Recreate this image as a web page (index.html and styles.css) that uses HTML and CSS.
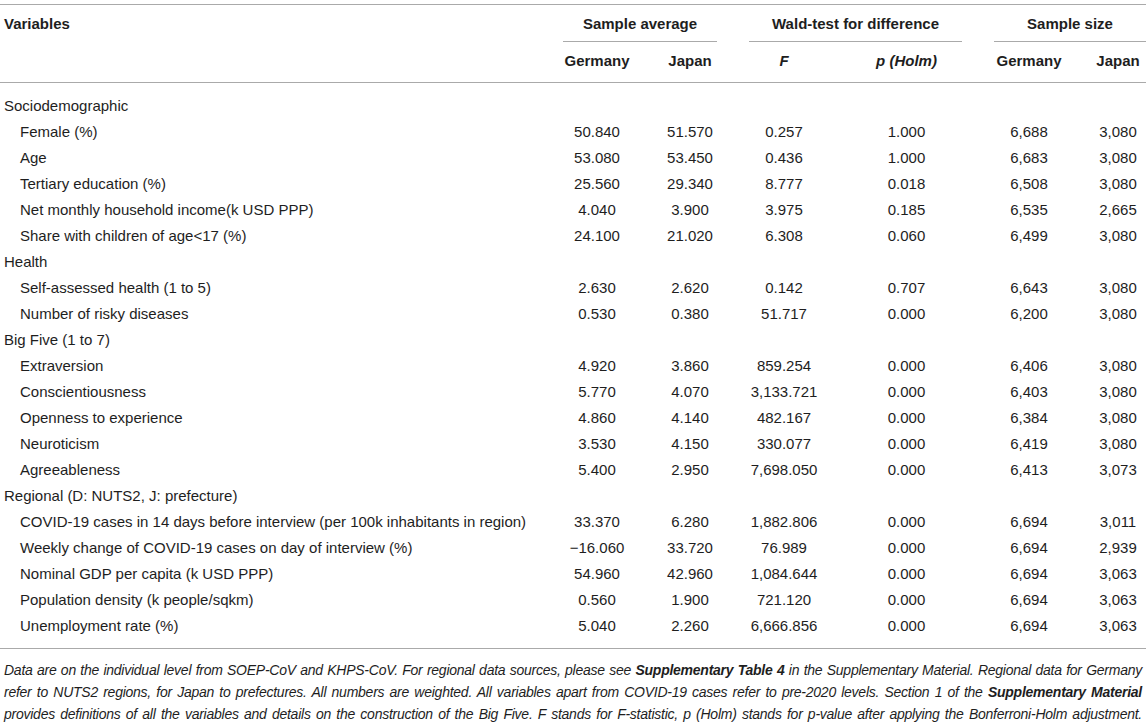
FILE: index.html
```html
<!DOCTYPE html>
<html lang="en">
<head>
<meta charset="utf-8">
<title>Table</title>
<link rel="stylesheet" href="styles.css">
</head>
<body>
<div class="page">
<table class="data">
  <colgroup>
    <col class="c-var">
    <col class="c-g1">
    <col class="c-j1">
    <col class="c-f">
    <col class="c-p">
    <col class="c-g2">
    <col class="c-j2">
  </colgroup>
  <thead>
    <tr class="hrow1">
      <th class="h-var" rowspan="2">Variables</th>
      <th class="h-group" colspan="2"><div class="group-label">Sample average</div></th>
      <th class="h-group" colspan="2"><div class="group-label">Wald-test for difference</div></th>
      <th class="h-group h-group-last" colspan="2"><div class="group-label">Sample size</div></th>
    </tr>
    <tr class="hrow2">
      <th>Germany</th>
      <th>Japan</th>
      <th><i>F</i></th>
      <th><i>p (Holm)</i></th>
      <th>Germany</th>
      <th class="last">Japan</th>
    </tr>
  </thead>
  <tbody>
    <tr class="cat first"><td>Sociodemographic</td><td></td><td></td><td></td><td></td><td></td><td class="last"></td></tr>
    <tr><td class="ind">Female (%)</td><td>50.840</td><td>51.570</td><td>0.257</td><td>1.000</td><td>6,688</td><td class="last">3,080</td></tr>
    <tr><td class="ind">Age</td><td>53.080</td><td>53.450</td><td>0.436</td><td>1.000</td><td>6,683</td><td class="last">3,080</td></tr>
    <tr><td class="ind">Tertiary education (%)</td><td>25.560</td><td>29.340</td><td>8.777</td><td>0.018</td><td>6,508</td><td class="last">3,080</td></tr>
    <tr><td class="ind">Net monthly household income(k USD PPP)</td><td>4.040</td><td>3.900</td><td>3.975</td><td>0.185</td><td>6,535</td><td class="last">2,665</td></tr>
    <tr><td class="ind">Share with children of age&lt;17 (%)</td><td>24.100</td><td>21.020</td><td>6.308</td><td>0.060</td><td>6,499</td><td class="last">3,080</td></tr>
    <tr class="cat"><td>Health</td><td></td><td></td><td></td><td></td><td></td><td class="last"></td></tr>
    <tr><td class="ind">Self-assessed health (1 to 5)</td><td>2.630</td><td>2.620</td><td>0.142</td><td>0.707</td><td>6,643</td><td class="last">3,080</td></tr>
    <tr><td class="ind">Number of risky diseases</td><td>0.530</td><td>0.380</td><td>51.717</td><td>0.000</td><td>6,200</td><td class="last">3,080</td></tr>
    <tr class="cat"><td>Big Five (1 to 7)</td><td></td><td></td><td></td><td></td><td></td><td class="last"></td></tr>
    <tr><td class="ind">Extraversion</td><td>4.920</td><td>3.860</td><td>859.254</td><td>0.000</td><td>6,406</td><td class="last">3,080</td></tr>
    <tr><td class="ind">Conscientiousness</td><td>5.770</td><td>4.070</td><td>3,133.721</td><td>0.000</td><td>6,403</td><td class="last">3,080</td></tr>
    <tr><td class="ind">Openness to experience</td><td>4.860</td><td>4.140</td><td>482.167</td><td>0.000</td><td>6,384</td><td class="last">3,080</td></tr>
    <tr><td class="ind">Neuroticism</td><td>3.530</td><td>4.150</td><td>330.077</td><td>0.000</td><td>6,419</td><td class="last">3,080</td></tr>
    <tr><td class="ind">Agreeableness</td><td>5.400</td><td>2.950</td><td>7,698.050</td><td>0.000</td><td>6,413</td><td class="last">3,073</td></tr>
    <tr class="cat"><td>Regional (D: NUTS2, J: prefecture)</td><td></td><td></td><td></td><td></td><td></td><td class="last"></td></tr>
    <tr><td class="ind">COVID-19 cases in 14 days before interview (per 100k inhabitants in region)</td><td>33.370</td><td>6.280</td><td>1,882.806</td><td>0.000</td><td>6,694</td><td class="last">3,011</td></tr>
    <tr><td class="ind">Weekly change of COVID-19 cases on day of interview (%)</td><td>&minus;16.060</td><td>33.720</td><td>76.989</td><td>0.000</td><td>6,694</td><td class="last">2,939</td></tr>
    <tr><td class="ind">Nominal GDP per capita (k USD PPP)</td><td>54.960</td><td>42.960</td><td>1,084.644</td><td>0.000</td><td>6,694</td><td class="last">3,063</td></tr>
    <tr><td class="ind">Population density (k people/sqkm)</td><td>0.560</td><td>1.900</td><td>721.120</td><td>0.000</td><td>6,694</td><td class="last">3,063</td></tr>
    <tr class="lastrow"><td class="ind">Unemployment rate (%)</td><td>5.040</td><td>2.260</td><td>6,666.856</td><td>0.000</td><td>6,694</td><td class="last">3,063</td></tr>
  </tbody>
</table>
<div class="foot">
  <span class="fline">Data are on the individual level from SOEP-CoV and KHPS-CoV. For regional data sources, please see <b>Supplementary Table 4</b> in the Supplementary Material. Regional data for Germany</span>
  <span class="fline">refer to NUTS2 regions, for Japan to prefectures. All numbers are weighted. All variables apart from COVID-19 cases refer to pre-2020 levels. Section 1 of the <b>Supplementary Material</b></span>
  <span class="fline">provides definitions of all the variables and details on the construction of the Big Five. F stands for F-statistic, p (Holm) stands for p-value after applying the Bonferroni-Holm adjustment.</span>
</div>
</div>
</body>
</html>
```

FILE: styles.css
```css
html, body {
  margin: 0;
  padding: 0;
  background: #fff;
  overflow: hidden;
}
body {
  font-family: "Liberation Sans", Arial, sans-serif;
  font-size: 15px;
  color: #1e1e1e;
}
.page {
  padding-top: 4px;
}
.data {
  width: 100%;
  border-collapse: separate;
  border-spacing: 0;
  table-layout: fixed;
}
.c-var { width: 547px; }
.c-g1 { width: 100px; }
.c-j1 { width: 86px; }
.c-f { width: 102px; }
.c-p { width: 143px; }
.c-g2 { width: 102px; }
.c-j2 { width: 66px; }

.data th {
  font-weight: bold;
  line-height: 20px;
  text-align: center;
  white-space: nowrap;
}
.hrow1 th {
  border-top: 1px solid #aaa;
  padding: 9px 16px 0 16px;
  vertical-align: top;
}
.group-label {
  border-bottom: 1px solid #aaa;
  padding-bottom: 7px;
}
.data th.h-group-last {
  padding-right: 0;
}
.data th.h-var {
  text-align: left;
  padding-left: 4px;
  border-bottom: 1px solid #aaa;
}
.hrow2 th {
  padding: 9px 0 11px 0;
  border-bottom: 1px solid #aaa;
}
.data th.last,
.data td.last {
  padding-left: 10px;
}
.data td {
  line-height: 20px;
  padding: 3px 0;
  text-align: center;
  white-space: nowrap;
}
.data td:first-child {
  text-align: left;
  padding-left: 4px;
}
.data td.ind {
  padding-left: 20px;
}
.data tr.first td {
  padding-top: 13px;
}
.data tr.lastrow td {
  padding-bottom: 12px;
  border-bottom: 1px solid #aaa;
}
.foot {
  margin-top: 10px;
  padding: 0 4px;
  font-style: italic;
  font-size: 14px;
  line-height: 22px;
  letter-spacing: -0.25px;
}
.fline {
  display: block;
  text-align: justify;
  text-align-last: justify;
}
```
